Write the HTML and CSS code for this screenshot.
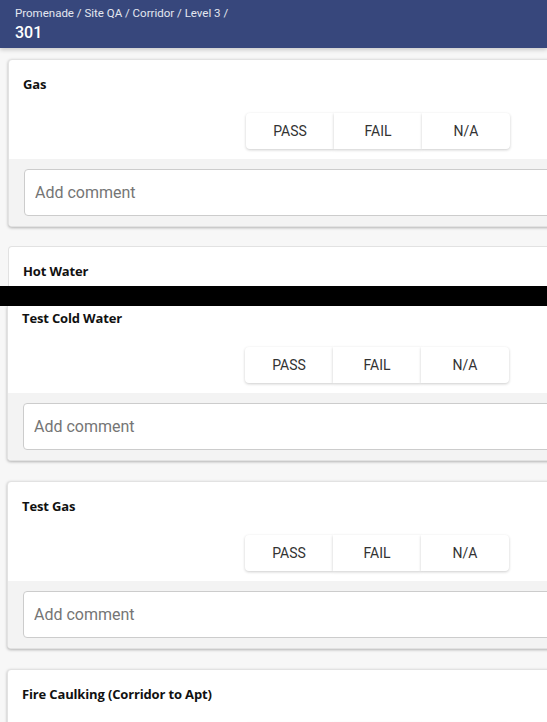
FILE: index.html
```html
<!DOCTYPE html>
<html>
<head>
<meta charset="utf-8">
<link rel="stylesheet" href="styles.css">
</head>
<body>
<header class="topbar">
  <div class="crumbs">Promenade / Site QA / Corridor / Level 3 /</div>
  <div class="unit">301</div>
</header>
<main class="list">
  <section class="card">
    <div class="card-body">
      <h2 class="title">Gas</h2>
      <div class="choices">
        <button class="choice">PASS</button>
        <button class="choice">FAIL</button>
        <button class="choice">N/A</button>
      </div>
    </div>
    <div class="card-foot">
      <input class="comment" type="text" placeholder="Add comment">
    </div>
  </section>

  <section class="card card-cut">
    <div class="card-body">
      <h2 class="title">Hot Water</h2>
    </div>
  </section>
</main>

<div class="redact"></div>

<main class="list list-lower">
  <section class="card card-continued">
    <div class="card-body">
      <h2 class="title">Test Cold Water</h2>
      <div class="choices">
        <button class="choice">PASS</button>
        <button class="choice">FAIL</button>
        <button class="choice">N/A</button>
      </div>
    </div>
    <div class="card-foot">
      <input class="comment" type="text" placeholder="Add comment">
    </div>
  </section>

  <section class="card">
    <div class="card-body">
      <h2 class="title">Test Gas</h2>
      <div class="choices">
        <button class="choice">PASS</button>
        <button class="choice">FAIL</button>
        <button class="choice">N/A</button>
      </div>
    </div>
    <div class="card-foot">
      <input class="comment" type="text" placeholder="Add comment">
    </div>
  </section>

  <section class="card">
    <div class="card-body">
      <h2 class="title">Fire Caulking (Corridor to Apt)</h2>
      <div class="choices">
        <button class="choice">PASS</button>
        <button class="choice">FAIL</button>
        <button class="choice">N/A</button>
      </div>
    </div>
    <div class="card-foot">
      <input class="comment" type="text" placeholder="Add comment">
    </div>
  </section>
</main>
</body>
</html>
```
FILE: styles.css
```css
html, body {
  margin: 0;
  padding: 0;
  overflow: hidden;
  height: 722px;
}
body {
  background: #f7f7f7;
  font-family: Roboto, "Liberation Sans", sans-serif;
  width: 547px;
}
.topbar {
  height: 48px;
  box-sizing: border-box;
  background: #37477c;
  color: #fff;
  padding: 5px 15px 0;
  box-shadow: 0 2px 4px rgba(0,0,0,0.18);
  position: relative;
  z-index: 1;
}
.crumbs {
  font-size: 11.5px;
  line-height: 16px;
  color: #e4e7f0;
}
.unit {
  font-size: 16px;
  font-weight: 500;
  line-height: 20px;
  margin-top: 2px;
}
.list {
  display: flex;
  flex-direction: column;
  gap: 19px;
  padding: 11px 0 0 8px;
}
.card {
  width: 580px;
  flex: none;
  background: #fff;
  border: 1px solid #e2e2e2;
  border-radius: 4px;
  box-shadow: 0 1px 3px rgba(0,0,0,0.28);
  overflow: hidden;
}
.card-body {
  padding: 15px 0 10px 14px;
}
.title {
  margin: 0;
  font-family: "Open Sans", "Noto Sans", sans-serif;
  font-weight: 700;
  font-size: 13px;
  line-height: 18px;
  letter-spacing: -0.15px;
  color: #111;
}
.choices {
  display: flex;
  margin: 20px 0 0 223px;
  width: 264px;
  height: 36px;
}
.choice {
  flex: 1;
  border: none;
  background: #fff;
  border-radius: 0;
  font-family: Roboto, "Liberation Sans", sans-serif;
  font-size: 14px;
  color: #333;
  box-shadow: 0 1px 3px rgba(0,0,0,0.2);
  padding: 0;
}
.choice:first-child { border-radius: 4px 0 0 4px; }
.choice:last-child { border-radius: 0 4px 4px 0; }
.card-foot {
  background: #f3f3f3;
  padding: 10px 0 10px 15px;
}
.comment {
  display: block;
  box-sizing: border-box;
  width: 560px;
  height: 47px;
  border: 1px solid #cccccc;
  border-radius: 4px;
  background: #fff;
  padding: 0 10px;
  font-family: Roboto, "Liberation Sans", sans-serif;
  font-size: 16px;
  color: #333;
  outline: none;
}
.comment::placeholder {
  color: #757575;
}
.card-cut {
  height: 39px;
  border-bottom: none;
  border-radius: 4px 4px 0 0;
  box-shadow: none;
}
.card-cut .card-body {
  padding-bottom: 0;
}
.redact {
  height: 20px;
  background: #000;
  position: relative;
  z-index: 2;
}
.list-lower {
  padding: 0 0 0 7px;
  gap: 20px;
}
.card-continued {
  border-top: none;
  border-radius: 0 0 4px 4px;
}
.card-continued .card-body {
  padding-top: 3px;
}
```
